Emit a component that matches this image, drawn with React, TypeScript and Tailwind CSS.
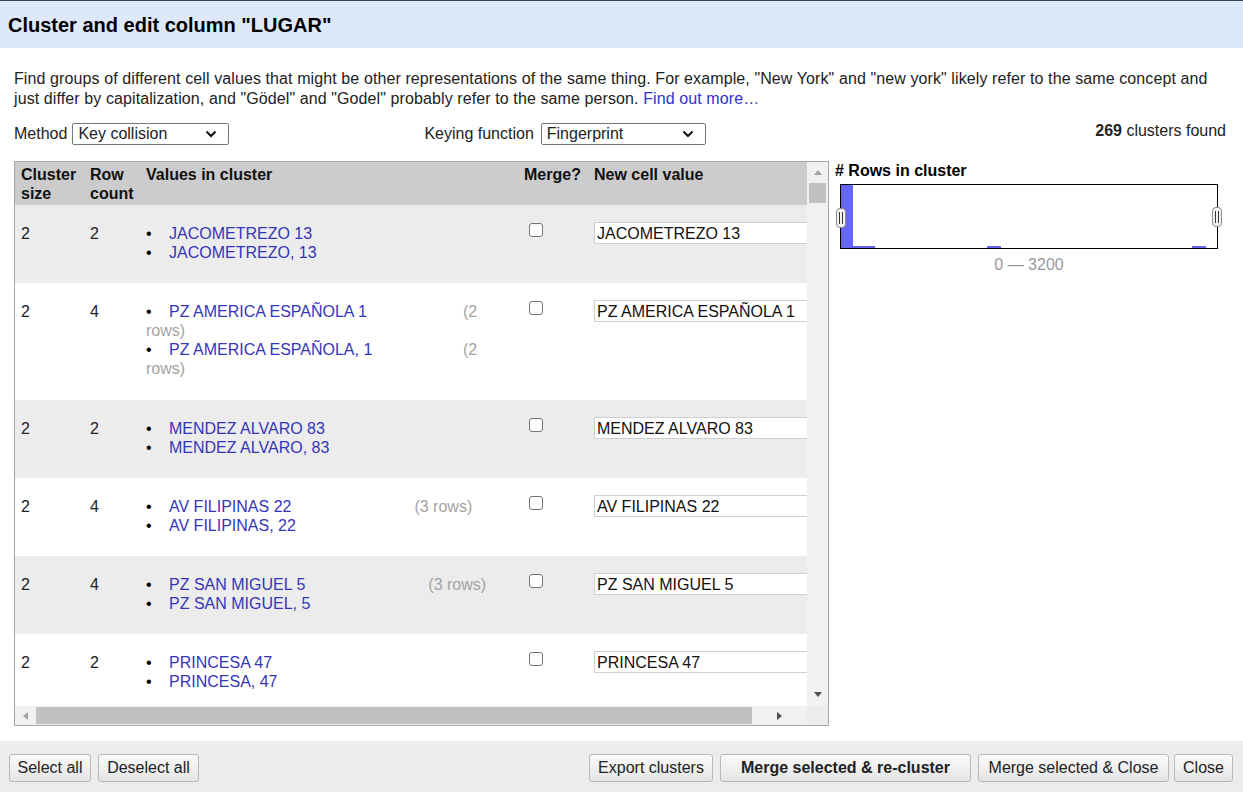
import React from "react";

type Item = { v: string; kind?: "wrap" | "inline" };
type Row = { size: string; rc: string; items: Item[]; value: string; h: string };

const rows: Row[] = [
  { size: "2", rc: "2", items: [{ v: "JACOMETREZO 13" }, { v: "JACOMETREZO, 13" }], value: "JACOMETREZO 13", h: "h-[78px]" },
  {
    size: "2",
    rc: "4",
    items: [
      { v: "PZ AMERICA ESPAÑOLA 1", kind: "wrap" },
      { v: "PZ AMERICA ESPAÑOLA, 1", kind: "wrap" },
    ],
    value: "PZ AMERICA ESPAÑOLA 1",
    h: "h-[117px]",
  },
  { size: "2", rc: "2", items: [{ v: "MENDEZ ALVARO 83" }, { v: "MENDEZ ALVARO, 83" }], value: "MENDEZ ALVARO 83", h: "h-[78px]" },
  {
    size: "2",
    rc: "4",
    items: [{ v: "AV FILIPINAS 22", kind: "inline" }, { v: "AV FILIPINAS, 22" }],
    value: "AV FILIPINAS 22",
    h: "h-[78px]",
  },
  {
    size: "2",
    rc: "4",
    items: [{ v: "PZ SAN MIGUEL 5", kind: "inline" }, { v: "PZ SAN MIGUEL, 5" }],
    value: "PZ SAN MIGUEL 5",
    h: "h-[78px]",
  },
  { size: "2", rc: "2", items: [{ v: "PRINCESA 47" }, { v: "PRINCESA, 47" }], value: "PRINCESA 47", h: "h-[78px]" },
];

function Chevron() {
  return (
    <svg width="12" height="8" viewBox="0 0 12 8" className="shrink-0">
      <path d="M1.5 1.5 L6 6 L10.5 1.5" fill="none" stroke="#111" strokeWidth="2" />
    </svg>
  );
}

function Select({ label, w }: { label: string; w: string }) {
  return (
    <div className={`${w} h-[22px] border border-[#767676] rounded-[2px] bg-white flex items-center justify-between pl-[5px] pr-[11px]`}>
      <span>{label}</span>
      <Chevron />
    </div>
  );
}

function Btn({ children, w, bold }: { children: React.ReactNode; w: string; bold?: boolean }) {
  return (
    <button
      className={`${w} h-[28px] border border-[#b9b9b9] rounded-[3px] bg-gradient-to-b from-[#fbfbfb] to-[#e4e4e4] text-[16px] text-[#222] ${bold ? "font-bold" : ""} flex items-center justify-center whitespace-nowrap`}
    >
      {children}
    </button>
  );
}

function Handle() {
  return (
    <div className="w-[10px] h-[20px] rounded-[4px] border border-[#8a8a8a] bg-[#f4f4f4] flex items-center justify-center gap-[2px]">
      <span className="block w-[1px] h-[12px] bg-[#333]" />
      <span className="block w-[1px] h-[12px] bg-[#333]" />
    </div>
  );
}

export default function App() {
  return (
    <div className="w-[1243px] h-[792px] bg-white flex flex-col font-['Liberation_Sans',Arial,sans-serif] text-[16px] text-[#222] overflow-hidden">
      <div className="h-px bg-[#34425a]" />
      <div className="h-[47px] bg-[#dde8fb] flex items-center px-[8px]">
        <h1 className="text-[20px] font-bold text-black leading-[24px]">Cluster and edit column "LUGAR"</h1>
      </div>

      <div className="pl-[14px] pr-[17px] pt-[21px]">
        <p className="leading-[20px] tracking-[0.1px]">
          Find groups of different cell values that might be other representations of the same thing. For example, "New York" and "new york" likely refer to the same concept and
          <br />
          just differ by capitalization, and "Gödel" and "Godel" probably refer to the same person.{" "}
          <span className="text-[#3333cc]">Find out more…</span>
        </p>

        <div className="mt-[14px] h-[22px] flex items-center">
          <span>Method</span>
          <div className="ml-[5px]">
            <Select label="Key collision" w="w-[157px]" />
          </div>
          <span className="ml-[195px]">Keying function</span>
          <div className="ml-[7px]">
            <Select label="Fingerprint" w="w-[165px]" />
          </div>
          <span className="ml-auto self-start -mt-[2px] leading-[19px]">
            <b>269</b> clusters found
          </span>
        </div>

        <div className="mt-[16px] flex items-start">
          {/* table box */}
          <div className="w-[815px] h-[565px] border border-[#a6a6a6] flex flex-col">
            <div className="flex h-[544px]">
              <div className="w-[792px] h-[544px] overflow-hidden">
                <div className="w-[1000px]">
                  <div className="flex bg-[#cccccc] h-[43px] pt-[3px] font-bold leading-[19px] text-[#111]">
                    <div className="w-[69px] pl-[6px]">
                      Cluster
                      <br />
                      size
                    </div>
                    <div className="w-[56px] pl-[6px]">
                      Row
                      <br />
                      count
                    </div>
                    <div className="w-[378px] pl-[6px]">Values in cluster</div>
                    <div className="w-[70px] pl-[6px]">Merge?</div>
                    <div className="flex-1 pl-[6px]">New cell value</div>
                  </div>
                  {rows.map((r, i) => (
                    <div key={i} className={`flex ${r.h} leading-[19px] ${i % 2 === 0 ? "bg-[#ececec]" : "bg-white"}`}>
                      <div className="w-[69px] pl-[6px] pt-[19px]">{r.size}</div>
                      <div className="w-[56px] pl-[6px] pt-[19px]">{r.rc}</div>
                      <div className="w-[378px] pl-[6px] pt-[19px]">
                        {r.items.map((it, j) => (
                          <div key={j} className="whitespace-nowrap">
                            {it.kind === "wrap" ? (
                              <>
                                <span className="inline-block w-[317px]">
                                  <span className="inline-block w-[23px] text-black">•</span>
                                  <span className="text-[#3535b8]">{it.v}</span>
                                </span>
                                <span className="text-[#a3a3a3]">(2</span>
                                <br />
                                <span className="text-[#a3a3a3]">rows)</span>
                              </>
                            ) : (
                              <>
                                <span className="inline-block w-[23px] text-black">•</span>
                                <span className="text-[#3535b8]">{it.v}</span>
                                {it.kind === "inline" && <span className="ml-[123px] text-[#a3a3a3]">(3 rows)</span>}
                              </>
                            )}
                          </div>
                        ))}
                      </div>
                      <div className="w-[70px] pl-[11px] pt-[18px]">
                        <span className="block w-[14px] h-[14px] border border-[#767676] rounded-[3px] bg-white" />
                      </div>
                      <div className="flex-1 pl-[6px] pt-[17px]">
                        <div className="w-[320px] h-[22px] border border-[#cfcfcf] bg-white pl-[2px] flex items-center text-[#111]">{r.value}</div>
                      </div>
                    </div>
                  ))}
                </div>
              </div>
              {/* vertical scrollbar */}
              <div className="w-[21px] h-[544px] bg-[#f1f1f1] flex flex-col items-center">
                <div className="h-[21px] w-full flex items-center justify-center">
                  <svg width="8" height="5" viewBox="0 0 8 5">
                    <path d="M0 5 L4 0 L8 5 Z" fill="#a3a3a3" />
                  </svg>
                </div>
                <div className="w-[17px] h-[20px] bg-[#c1c1c1]" />
                <div className="flex-1" />
                <div className="h-[21px] w-full flex items-center justify-center pb-[2px]">
                  <svg width="8" height="5" viewBox="0 0 8 5">
                    <path d="M0 0 L4 5 L8 0 Z" fill="#505050" />
                  </svg>
                </div>
              </div>
            </div>
            {/* horizontal scrollbar */}
            <div className="flex h-[19px]">
              <div className="w-[792px] h-[19px] bg-[#f1f1f1] flex items-center">
                <div className="w-[21px] h-full flex items-center justify-center">
                  <svg width="5" height="8" viewBox="0 0 5 8">
                    <path d="M5 0 L0 4 L5 8 Z" fill="#a3a3a3" />
                  </svg>
                </div>
                <div className="w-[716px] h-[17px] bg-[#c1c1c1]" />
                <div className="flex-1 h-full flex items-center justify-center">
                  <svg width="5" height="8" viewBox="0 0 5 8">
                    <path d="M0 0 L5 4 L0 8 Z" fill="#505050" />
                  </svg>
                </div>
              </div>
              <div className="w-[21px] h-[19px] bg-[#ececec]" />
            </div>
          </div>

          {/* right panel */}
          <div className="ml-[6px] w-[390px]">
            <div className="font-bold leading-[19px] text-black">
              # Rows in cluster
            </div>
            <div className="mt-[4px] ml-[1px] relative w-[382px] h-[64px]">
              <div className="absolute left-[4px] top-0 w-[378px] h-[65px] border border-black bg-white">
                <div className="absolute left-0 top-0 w-[12px] h-[63px] bg-[#6666ff]" />
                <div className="absolute left-0 bottom-0 w-[34px] h-[2px] bg-[#6666ff]" />
                <div className="absolute left-[146px] bottom-0 w-[14px] h-[2px] bg-[#6666ff]" />
                <div className="absolute left-[351px] bottom-0 w-[14px] h-[2px] bg-[#6666ff]" />
              </div>
              <div className="absolute left-0 top-[24px]">
                <Handle />
              </div>
              <div className="absolute left-[376px] top-[23px]">
                <Handle />
              </div>
            </div>
            <div className="mt-[7px] ml-[5px] w-[378px] text-center text-[#999] leading-[19px]">0 — 3200</div>
          </div>
        </div>
      </div>

      <div className="mt-auto h-[51px] bg-[#ececec] flex items-start pt-[13px] pl-[9px] pr-[10px]">
        <div className="flex gap-[7px]">
          <Btn w="w-[82px]">Select all</Btn>
          <Btn w="w-[101px]">Deselect all</Btn>
        </div>
        <div className="ml-auto flex gap-[7px]">
          <Btn w="w-[124px]">Export clusters</Btn>
          <Btn w="w-[251px]" bold>
            Merge selected &amp; re-cluster
          </Btn>
          <Btn w="w-[191px]">Merge selected &amp; Close</Btn>
          <div className="-ml-[2px]">
            <Btn w="w-[59px]">Close</Btn>
          </div>
        </div>
      </div>
    </div>
  );
}
